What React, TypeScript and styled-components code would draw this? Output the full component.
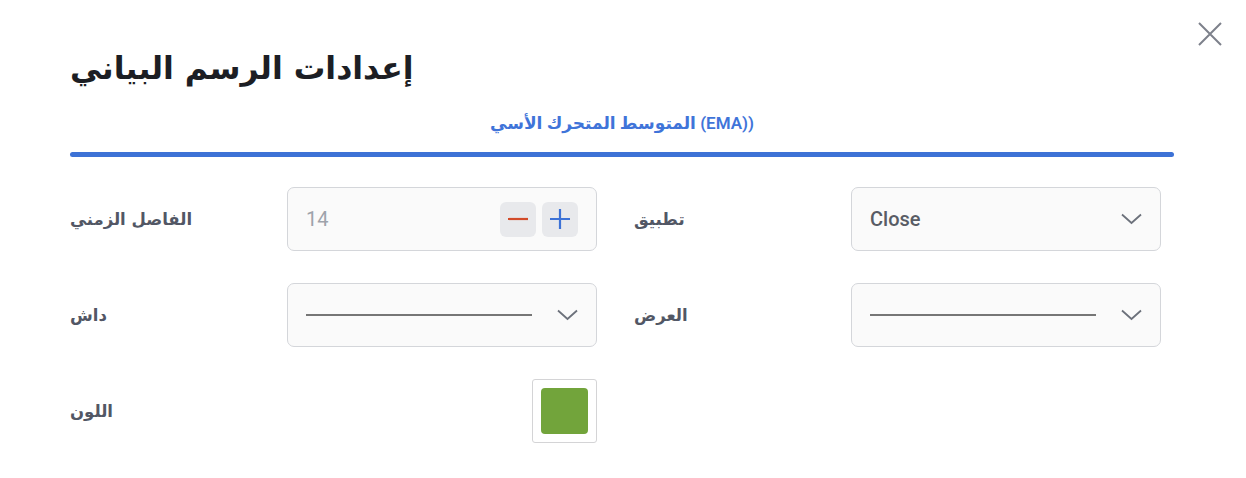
import React from 'react'
import styled, { createGlobalStyle } from 'styled-components'

const GlobalStyle = createGlobalStyle`
  html, body {
    margin: 0;
    padding: 0;
    background: #ffffff;
  }
  body {
    font-family: Roboto, "DejaVu Sans", sans-serif;
  }
`

const Dialog = styled.div`
  position: relative;
  width: 1246px;
  height: 478px;
  box-sizing: border-box;
  padding: 44px 72px 0 70px;
  background: #ffffff;
`

const CloseButton = styled.button`
  position: absolute;
  top: 21px;
  right: 23px;
  width: 26px;
  height: 26px;
  padding: 0;
  border: none;
  background: transparent;
  display: flex;
  align-items: center;
  justify-content: center;
  cursor: pointer;
`

const Title = styled.h2`
  margin: 0;
  height: 48px;
  font-family: "DejaVu Sans", sans-serif;
  font-weight: 700;
  font-size: 31.5px;
  line-height: 48px;
  color: #1c1e24;
`

const Tabs = styled.div`
  display: flex;
  flex-direction: column;
  align-items: center;
  margin-top: 17px;
`

const TabLabel = styled.div`
  direction: ltr;
  height: 28px;
  line-height: 28px;
  font-family: Roboto, "DejaVu Sans", sans-serif;
  font-size: 17px;
  font-weight: 600;
  color: #3f74d9;
`

const TabBar = styled.div`
  align-self: stretch;
  height: 5px;
  margin-top: 15px;
  border-radius: 3px;
  background: #3d72d6;
`

const Form = styled.div`
  display: grid;
  grid-template-columns: 217px 310px 254px 310px;
  row-gap: 32px;
  margin-top: 30px;
`

const Label = styled.div<{ $inset?: boolean }>`
  display: flex;
  align-items: center;
  height: 64px;
  padding-left: ${p => (p.$inset ? '37px' : '0')};
  font-family: "DejaVu Sans", sans-serif;
  font-size: 16.5px;
  font-weight: 600;
  color: #525765;
`

const FieldCell = styled.div<{ $end?: boolean }>`
  display: flex;
  align-items: center;
  justify-content: ${p => (p.$end ? 'flex-end' : 'stretch')};
  height: 64px;
`

const FieldBox = styled.div`
  flex: 1;
  display: flex;
  align-items: center;
  height: 64px;
  box-sizing: border-box;
  padding: 0 18px;
  border: 1px solid #d4d6da;
  border-radius: 7px;
  background: #fafafa;
`

const NumberValue = styled.span`
  flex: 1;
  font-size: 20px;
  color: #9ea3ab;
`

const StepButtons = styled.div`
  display: flex;
  gap: 6px;
`

const StepButton = styled.button<{ $color: string }>`
  width: 36px;
  height: 35px;
  padding: 0;
  border: none;
  border-radius: 6px;
  background: #e8e9ec;
  color: ${p => p.$color};
  display: flex;
  align-items: center;
  justify-content: center;
`

const SelectText = styled.span`
  flex: 1;
  font-size: 20px;
  font-weight: 500;
  color: #585c65;
`

const LinePreview = styled.div`
  width: 226px;
  height: 2px;
  margin-right: auto;
  background: #767676;
`

const Swatch = styled.div`
  width: 65px;
  height: 64px;
  box-sizing: border-box;
  padding: 8px;
  border: 1px solid #d4d4d6;
  border-radius: 3px;
  background: #ffffff;
`

const SwatchColor = styled.div<{ $color: string }>`
  width: 100%;
  height: 100%;
  border-radius: 4px;
  background: ${p => p.$color};
`

const Chevron = () => (
  <svg width="21" height="12" viewBox="0 0 21 12" fill="none">
    <polyline points="1,1.5 10.5,10 20,1.5" stroke="#6c717b" strokeWidth="1.8" />
  </svg>
)

const Select = ({ children }: { children: React.ReactNode }) => (
  <FieldBox>
    {children}
    <Chevron />
  </FieldBox>
)

export default function App() {
  return (
    <>
      <GlobalStyle />
      <Dialog>
        <CloseButton aria-label="close">
          <svg width="26" height="26" viewBox="0 0 26 26">
            <path d="M2 2 L24 24 M24 2 L2 24" stroke="#7d818b" strokeWidth="2" />
          </svg>
        </CloseButton>
        <Title>إعدادات الرسم البياني</Title>
        <Tabs>
          <TabLabel>المتوسط المتحرك الأسي (EMA))</TabLabel>
          <TabBar />
        </Tabs>
        <Form>
          <Label>الفاصل الزمني</Label>
          <FieldCell>
            <FieldBox>
              <NumberValue>14</NumberValue>
              <StepButtons>
                <StepButton $color="#d24b2a" aria-label="decrease">
                  <svg width="20" height="20" viewBox="0 0 20 20">
                    <path d="M0 10 H20" stroke="currentColor" strokeWidth="2.2" />
                  </svg>
                </StepButton>
                <StepButton $color="#3d72d6" aria-label="increase">
                  <svg width="20" height="20" viewBox="0 0 20 20">
                    <path d="M0 10 H20 M10 0 V20" stroke="currentColor" strokeWidth="2.2" />
                  </svg>
                </StepButton>
              </StepButtons>
            </FieldBox>
          </FieldCell>
          <Label $inset>تطبيق</Label>
          <FieldCell>
            <Select>
              <SelectText>Close</SelectText>
            </Select>
          </FieldCell>

          <Label>داش</Label>
          <FieldCell>
            <Select>
              <LinePreview />
            </Select>
          </FieldCell>
          <Label $inset>العرض</Label>
          <FieldCell>
            <Select>
              <LinePreview />
            </Select>
          </FieldCell>

          <Label>اللون</Label>
          <FieldCell $end>
            <Swatch>
              <SwatchColor $color="#72a43b" />
            </Swatch>
          </FieldCell>
        </Form>
      </Dialog>
    </>
  )
}
